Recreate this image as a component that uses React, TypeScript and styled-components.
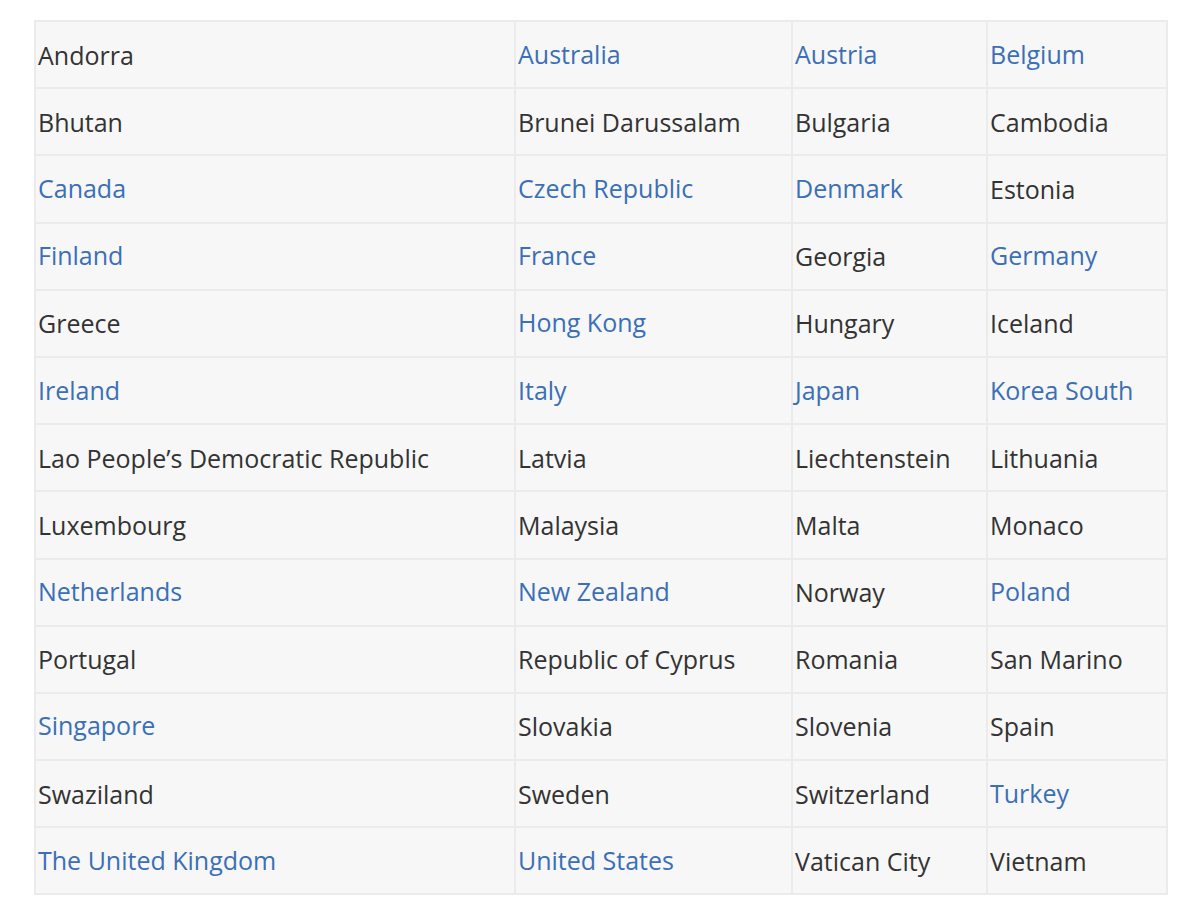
import React from "react";
import styled, { createGlobalStyle } from "styled-components";

type Country = { name: string; link?: boolean };

const c = (name: string, link = false): Country => ({ name, link });

const rows: Country[][] = [
  [c("Andorra"), c("Australia", true), c("Austria", true), c("Belgium", true)],
  [c("Bhutan"), c("Brunei Darussalam"), c("Bulgaria"), c("Cambodia")],
  [c("Canada", true), c("Czech Republic", true), c("Denmark", true), c("Estonia")],
  [c("Finland", true), c("France", true), c("Georgia"), c("Germany", true)],
  [c("Greece"), c("Hong Kong", true), c("Hungary"), c("Iceland")],
  [c("Ireland", true), c("Italy", true), c("Japan", true), c("Korea South", true)],
  [c("Lao People’s Democratic Republic"), c("Latvia"), c("Liechtenstein"), c("Lithuania")],
  [c("Luxembourg"), c("Malaysia"), c("Malta"), c("Monaco")],
  [c("Netherlands", true), c("New Zealand", true), c("Norway"), c("Poland", true)],
  [c("Portugal"), c("Republic of Cyprus"), c("Romania"), c("San Marino")],
  [c("Singapore", true), c("Slovakia"), c("Slovenia"), c("Spain")],
  [c("Swaziland"), c("Sweden"), c("Switzerland"), c("Turkey", true)],
  [c("The United Kingdom", true), c("United States", true), c("Vatican City"), c("Vietnam")],
];

const colWidths = [480, 277, 195, 180];

export default function App() {
  return (
    <>
      <GlobalStyle />
      <Page>
        <CountryTable>
          <colgroup>
            {colWidths.map((w, i) => (
              <col key={i} style={{ width: w }} />
            ))}
          </colgroup>
          <tbody>
            {rows.map((row, r) => (
              <tr key={r}>
                {row.map((item) => (
                  <Cell key={item.name}>
                    {item.link ? (
                      <CountryLink href="#">{item.name}</CountryLink>
                    ) : (
                      item.name
                    )}
                  </Cell>
                ))}
              </tr>
            ))}
          </tbody>
        </CountryTable>
      </Page>
    </>
  );
}

const GlobalStyle = createGlobalStyle`
  body {
    margin: 0;
    background: #fff;
    font-family: "Open Sans", "Noto Sans", sans-serif;
  }
`;

const Page = styled.div`
  padding: 20px 18px 20px 34px;
`;

const CountryTable = styled.table`
  width: 1134px;
  table-layout: fixed;
  border-collapse: collapse;
  background: #f7f7f7;
  border: 2px solid #ebebeb;
`;

const Cell = styled.td`
  height: 65.2px;
  padding: 0 2px 0 2px;
  border: 2px solid #ebebeb;
  vertical-align: middle;
  font-size: 25px;
  line-height: 34px;
  color: #333;
  white-space: nowrap;
`;

const CountryLink = styled.a`
  color: #3b6fb6;
  text-decoration: none;
  vertical-align: 2px;
`;
